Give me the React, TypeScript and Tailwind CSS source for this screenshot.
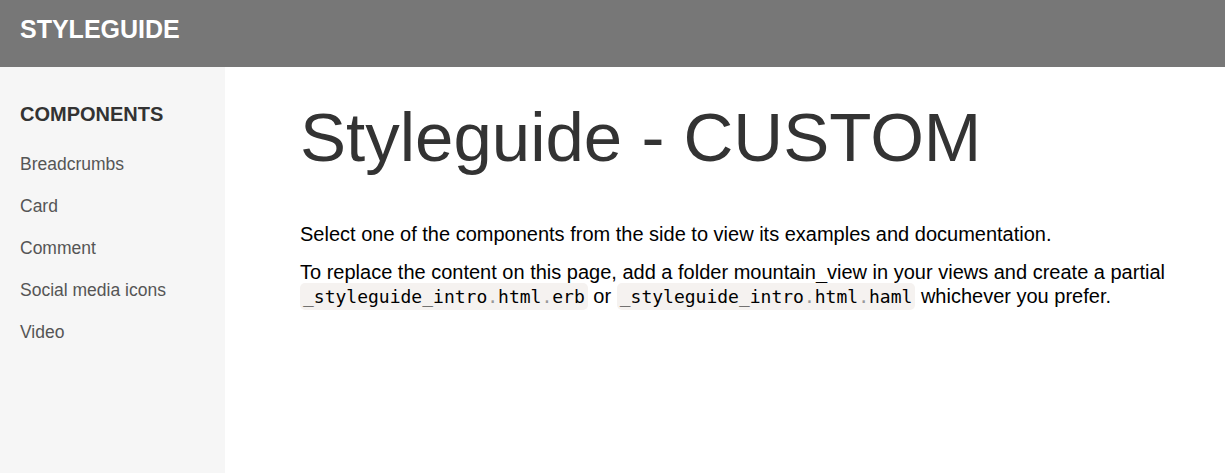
const components = ['Breadcrumbs', 'Card', 'Comment', 'Social media icons', 'Video'];

function Code({ parts }: { parts: string[] }) {
  // dots are dimmed like a syntax highlighter would do
  return (
    <code className="rounded-[5px] bg-[#f5f2f0] px-[3px] py-[3px] font-['DejaVu_Sans_Mono',monospace] text-[18px] text-black">
      {parts.map((p, i) => (
        <span key={i}>
          {i > 0 && <span className="text-[#999]">.</span>}
          {p}
        </span>
      ))}
    </code>
  );
}

export default function App() {
  return (
    <div className="flex min-h-[473px] flex-col font-['Liberation_Sans',Arial,sans-serif]">
      <header className="h-[67px] bg-[#777777] px-5 pt-[17px]">
        <h1 className="text-[25px] font-bold leading-none text-white">STYLEGUIDE</h1>
      </header>
      <div className="flex flex-1">
        <nav className="w-[225px] shrink-0 bg-[#f6f6f6] px-5 pt-[37px]">
          <h2 className="text-[20px] font-bold leading-none text-[#333]">COMPONENTS</h2>
          <ul className="mt-[19px]">
            {components.map((c) => (
              <li key={c} className="text-[17.5px] leading-[42px]">
                <a href="#" className="text-[#555]">
                  {c}
                </a>
              </li>
            ))}
          </ul>
        </nav>
        <main className="flex-1 pl-[75px] pr-10 pt-[33px]">
          <h1 className="text-[69px] leading-[1.1] text-[#333]">Styleguide - CUSTOM</h1>
          <p className="mt-[46px] text-[20px] leading-[24px] text-black">
            Select one of the components from the side to view its examples and documentation.
          </p>
          <p className="mt-[14px] text-[20px] leading-[24px] text-black">
            To replace the content on this page, add a folder mountain_view in your views and create a partial{' '}
            <Code parts={['_styleguide_intro', 'html', 'erb']} /> or{' '}
            <Code parts={['_styleguide_intro', 'html', 'haml']} /> whichever you prefer.
          </p>
        </main>
      </div>
    </div>
  );
}
